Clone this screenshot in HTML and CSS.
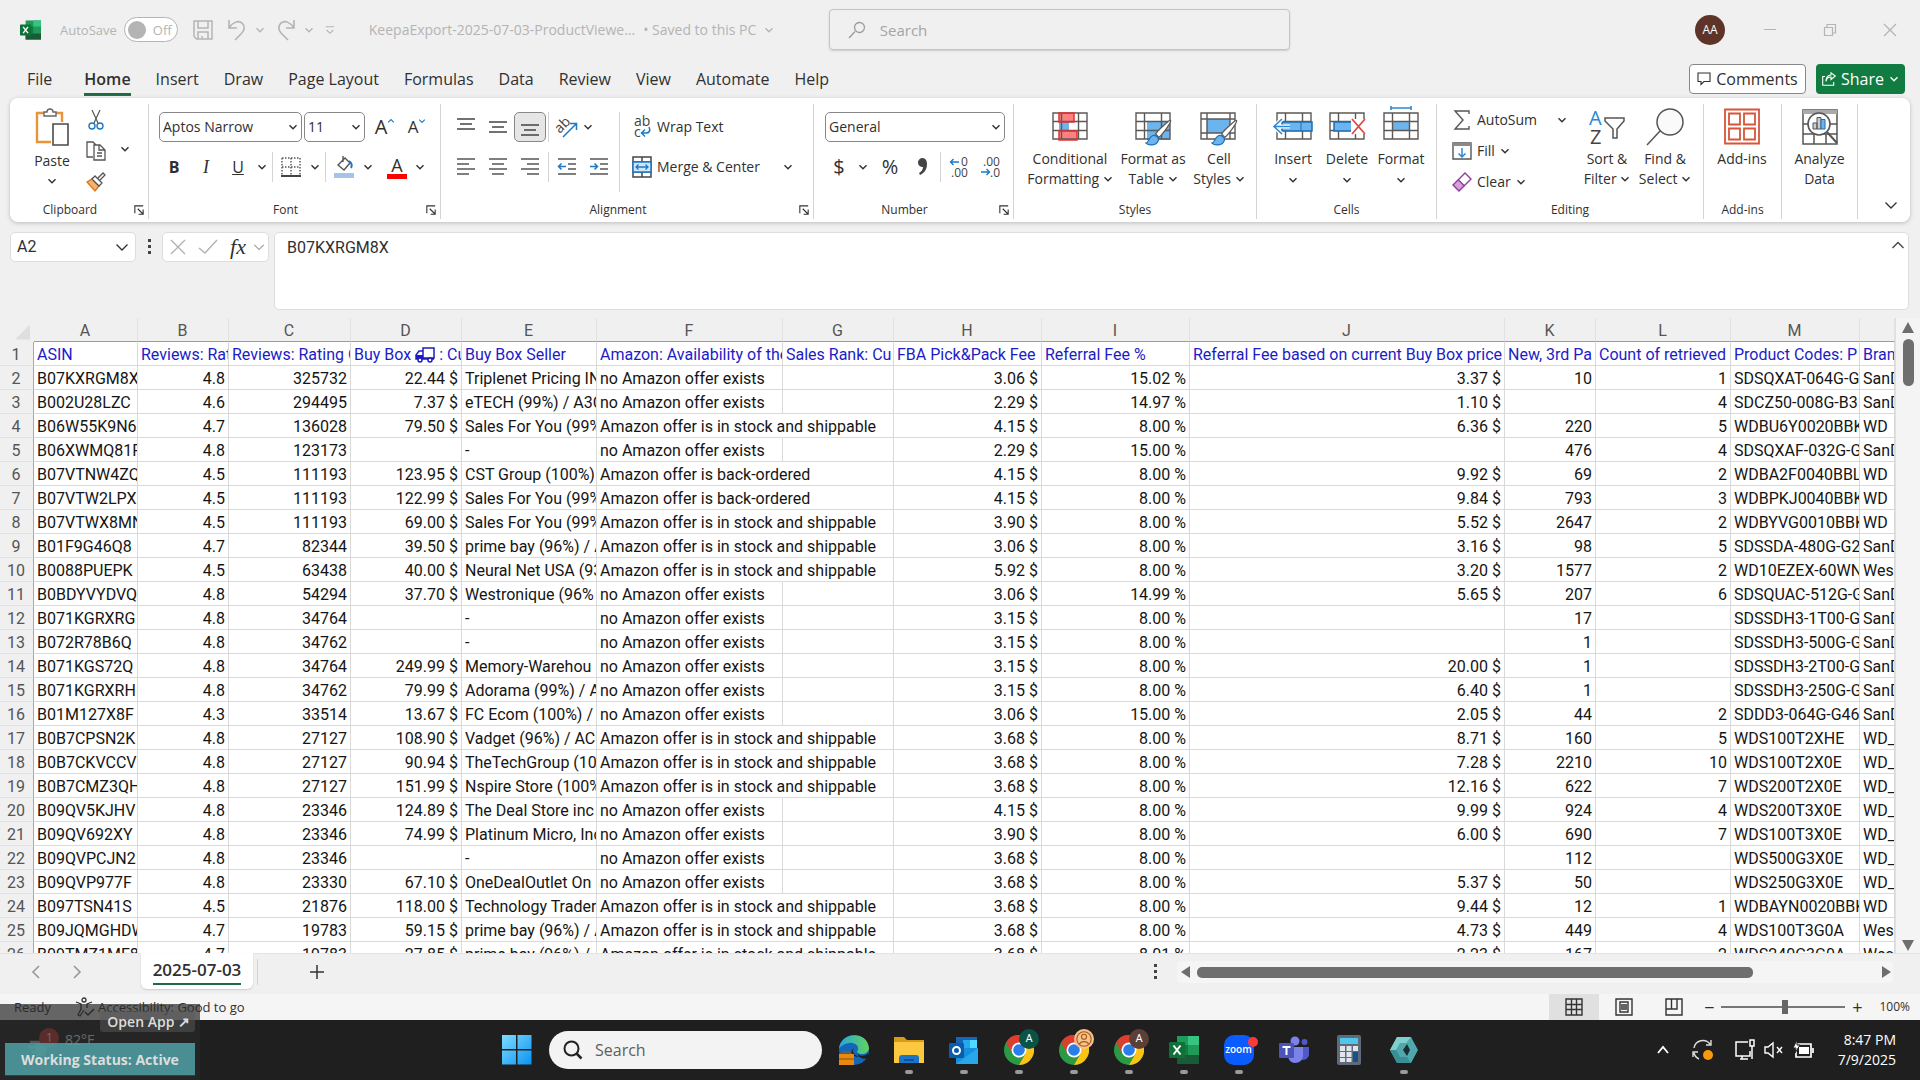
FILE: index.html
```html
<!DOCTYPE html>
<html lang="en">
<head>
<meta charset="utf-8">
<title>KeepaExport-2025-07-03-ProductViewer - Excel</title>
<link rel="stylesheet" href="styles.css">
</head>
<body>
<svg class="defs" aria-hidden="true">
  <symbol id="chev" viewBox="0 0 10 10"><path d="M1.5 3.2 5 6.7 8.5 3.2" fill="none" stroke="currentColor" stroke-width="1.4"/></symbol>
  <symbol id="chevthin" viewBox="0 0 14 14"><path d="m1.500 4.500 5.500 5.500 5.500-5.500" fill="none" stroke="currentColor" stroke-width="1.300"/></symbol>
  <symbol id="launch" viewBox="0 0 12 12"><path d="M1 10V1h10M4.500 4.500l6 6M11 5.500V11H5.500" fill="none" stroke="currentColor" stroke-width="1.300"/></symbol>
  <symbol id="cells" viewBox="0 0 36 28"><path d="M1 1h34v26H1zM1 9.500h34M1 18.500h34M9.500 1v26M26.500 1v26" fill="none" stroke="#5c5856" stroke-width="1.400"/></symbol>
  <symbol id="brush" viewBox="0 0 28 28"><path d="M26.500 1.500c-1-.8-13 10-15.500 14l3.500 3.500C18 16 28 3 26.500 1.500z" fill="#fff" stroke="#5c5856" stroke-width="1.300"/><path d="M1 25c3 .2 3-7.500 8-8 3-.2 6 3 4.500 6C11.500 27.500 4 28 1 25z" fill="#6cb4ee" stroke="#1c6db5" stroke-width="1.200"/></symbol>
  <symbol id="chrome" viewBox="0 0 30 30"><circle cx="15" cy="15" r="15" fill="#2a9a45"/><path d="M2 7.500A15 15 0 0 1 28 7.500L15 8z" fill="#e33b2e"/><path d="M2 7.500 8.500 18.800 15 8z" fill="#e33b2e"/><path d="M28 7.500A15 15 0 0 1 15 30l6.500-11.200L15 7.500z" fill="#fbc313"/><circle cx="15" cy="15" r="7.500" fill="#fff"/><circle cx="15" cy="15" r="5.800" fill="#2b7de9"/></symbol>
  <symbol id="excel" viewBox="0 0 30 28"><path d="M8 0h22v28H8z" fill="#1f9a59"/><path d="M19 0h11v9H19z" fill="#35c481"/><path d="M8 9h11v10H8z" fill="#107c41"/><path d="M19 19h11v9H19zM8 19h11v9H8z" fill="#185c37"/><rect y="6" width="16" height="16" rx="1" fill="#0c7238"/><path d="m4.500 9.500 7 9m0-9-7 9" stroke="#fff" stroke-width="2"/></symbol>
</svg>

<header class="titlebar">
  <svg class="xl-logo" viewBox="0 0 30 28"><use href="#excel"/></svg>
  <label class="autosave"><span>AutoSave</span><input type="checkbox" role="switch"><span class="toggle">Off</span></label>
  <div class="quick">
    <button aria-label="Save"><svg width="20" height="20" viewBox="0 0 20 20"><path d="M1 1h18v18H3.500L1 16.500zM5 1v7h10V1M5 19v-7h10v7M9 19v-3" fill="none" stroke="currentColor" stroke-width="1.500"/></svg></button>
    <button aria-label="Undo"><svg width="20" height="22" viewBox="0 0 20 22"><path d="M2 1v8h8M2 9c4-6 9-8 13-5 4 4 2 8-1 11l-6 6" fill="none" stroke="currentColor" stroke-width="1.600"/></svg></button>
    <svg class="chev"><use href="#chev"/></svg>
    <button aria-label="Redo"><svg width="20" height="22" viewBox="0 0 20 22"><path d="M18 1v8h-8M18 9c-4-6-9-8-13-5-4 4-2 8 1 11l6 6" fill="none" stroke="currentColor" stroke-width="1.600"/></svg></button>
    <svg class="chev"><use href="#chev"/></svg>
    <button aria-label="Customize toolbar"><svg width="10" height="12" viewBox="0 0 12 12"><path d="M1 2h10M2 6l4 4 4-4" fill="none" stroke="currentColor" stroke-width="1.300"/></svg></button>
  </div>
  <div class="doc"><span>KeepaExport-2025-07-03-ProductViewe...</span><span>• Saved to this PC</span><svg class="chev"><use href="#chev"/></svg></div>
  <label class="topsearch"><svg width="18" height="18" viewBox="0 0 18 18"><path d="M1 17l6-6.500M6.500 6.500a5 5 0 1 1 2 4 5 5 0 0 1-2-4z" fill="none" stroke="#9a9a9a" stroke-width="1.300"/></svg><input type="search" placeholder="Search" aria-label="Search"></label>
  <div class="window">
    <span class="avatar">AA</span>
    <button aria-label="Minimize"><svg width="14" height="14" viewBox="0 0 14 14"><path d="M1 6.500h12" stroke="currentColor"/></svg></button>
    <button aria-label="Restore"><svg width="14" height="14" viewBox="0 0 14 14"><path d="M1.500 4.500h8v8h-8zM4 4V1.500h8.500V10H10" fill="none" stroke="currentColor" stroke-width="1.200"/></svg></button>
    <button aria-label="Close"><svg width="14" height="14" viewBox="0 0 14 14"><path d="m1 1 12 12M13 1 1 13" stroke="currentColor" stroke-width="1.200"/></svg></button>
  </div>
</header>

<nav class="tabs">
  <a href="#file">File</a><a href="#home" class="on">Home</a><a href="#insert">Insert</a><a href="#draw">Draw</a><a href="#layout">Page Layout</a><a href="#formulas">Formulas</a><a href="#data">Data</a><a href="#review">Review</a><a href="#view">View</a><a href="#automate">Automate</a><a href="#help">Help</a>
  <div class="tab-actions">
    <button class="comments"><svg width="14" height="14" viewBox="0 0 14 14"><path d="M1 1h12v8.500H7L4 12.500v-3H1z" fill="none" stroke="currentColor" stroke-width="1.100"/></svg>Comments</button>
    <button class="share"><svg width="14" height="14" viewBox="0 0 14 14"><path d="M3 4.500H.7v8.800h11V10M4 9.500C4.500 6 6.500 5 9 5V7.500L13.300 4 9 .8V3C6 3.200 4 5 4 9.500z" fill="none" stroke="currentColor" stroke-width="1.100"/></svg>Share<svg class="chev"><use href="#chev"/></svg></button>
  </div>
</nav>

<section class="ribbon">
  <div class="group g-clip">
    <div class="body">
      <button class="big paste"><svg width="34" height="38" viewBox="0 0 34 38"><path d="M9 5H2v29h14M21 5h6v9" fill="none" stroke="#e8953a" stroke-width="2.400"/><path d="M9 8V4h3a3 3 0 0 1 6 0h3v4z" fill="#fff" stroke="#666" stroke-width="1.400"/><path d="M18 16h15v21H18z" fill="#fff" stroke="#4b4b4b" stroke-width="1.600"/></svg><span>Paste</span><svg class="chev"><use href="#chev"/></svg></button>
      <div class="stack">
        <button aria-label="Cut"><svg width="16" height="20" viewBox="0 0 16 20"><path d="M4 0l6 13M12 0 6 13" stroke="#555" stroke-width="1.200" fill="none"/><circle cx="4" cy="16" r="3" fill="none" stroke="#1e78c8" stroke-width="1.400"/><circle cx="12" cy="16" r="3" fill="none" stroke="#1e78c8" stroke-width="1.400"/></svg></button>
        <button aria-label="Copy"><svg width="20" height="20" viewBox="0 0 20 20"><path d="M7 16H1V1h6l3 3M8 4h6l5 5v10H8zM13 4v5h6M11 12h5M11 15h5" fill="none" stroke="#555" stroke-width="1.300"/></svg></button>
        <button aria-label="Format Painter"><svg width="20" height="20" viewBox="0 0 20 20"><path d="M1 10l5-3 7 7-4 5z" fill="#f6b26b" stroke="#d9791d" stroke-width="1.400"/><path d="M6 7l3-3 7 7-3 3zM12 6l5-5 2 2-5 5" fill="#fff" stroke="#555" stroke-width="1.300"/></svg></button>
      </div>
      <svg class="chev mid"><use href="#chev"/></svg>
    </div>
    <div class="cap">Clipboard<svg class="launch"><use href="#launch"/></svg></div>
  </div>

  <div class="group g-font">
    <div class="body rows">
      <div class="row">
        <span class="sel w-font"><select aria-label="Font"><option>Aptos Narrow</option></select><svg class="chev"><use href="#chev"/></svg></span>
        <span class="sel w-size"><select aria-label="Font size"><option>11</option></select><svg class="chev"><use href="#chev"/></svg></span>
        <button class="ib big-a" aria-label="Increase font size">A<svg class="chev up"><use href="#chev"/></svg></button>
        <button class="ib small-a" aria-label="Decrease font size">A<svg class="chev"><use href="#chev"/></svg></button>
      </div>
      <div class="row">
        <button class="ib"><b>B</b></button><button class="ib it"><i>I</i></button><button class="ib"><u>U</u></button><svg class="chev wide"><use href="#chev"/></svg><i class="sep"></i>
        <button class="ib" aria-label="Borders"><svg width="20" height="20" viewBox="0 0 20 20"><path d="M1 1h18v17M1 1v17M10 1v17M1 10h18" fill="none" stroke="#555" stroke-width="1.400" stroke-dasharray="1.500 1.500"/><path d="M0 19h20" stroke="#444" stroke-width="2"/></svg></button><svg class="chev wide"><use href="#chev"/></svg><i class="sep"></i>
        <button class="ib" aria-label="Fill color"><svg width="20" height="22" viewBox="0 0 20 22"><path d="M4 9l7-7 5 5-6 7zM9 0v6" fill="#fff" stroke="#555" stroke-width="1.400"/><path d="M15 5c3 2 3 5 2 7" fill="none" stroke="#1e78c8" stroke-width="2"/><path d="M0 17h20v5H0z" fill="#a3c4e8"/></svg></button><svg class="chev wide"><use href="#chev"/></svg>
        <button class="ib fontcolor" aria-label="Font color">A</button><svg class="chev wide"><use href="#chev"/></svg>
      </div>
    </div>
    <div class="cap">Font<svg class="launch"><use href="#launch"/></svg></div>
  </div>

  <div class="group g-align">
    <div class="body">
      <div class="rows">
        <div class="row">
          <button class="ib" aria-label="Top align"><svg width="20" height="20" viewBox="0 0 20 20"><path d="M1 2h18M4 7h12M1 12h18" stroke="#444" stroke-width="1.500"/></svg></button><button class="ib" aria-label="Middle align"><svg width="20" height="20" viewBox="0 0 20 20"><path d="M1 5h18M4 10h12M1 15h18" stroke="#444" stroke-width="1.500"/></svg></button><button class="ib pressed" aria-label="Bottom align"><svg width="20" height="20" viewBox="0 0 20 20"><path d="M1 8h18M4 13h12M1 18h18" stroke="#444" stroke-width="1.500"/></svg></button><i class="sep"></i>
          <button class="ib" aria-label="Orientation"><svg width="22" height="22" viewBox="0 0 22 22"><text x="-2" y="12" transform="rotate(-45 8 8)" font-size="14" fill="#444">ab</text><path d="M7 21 20 8M14 7.500h6.500V14" fill="none" stroke="#1e78c8" stroke-width="1.500"/></svg></button><svg class="chev"><use href="#chev"/></svg>
        </div>
        <div class="row">
          <button class="ib" aria-label="Align left"><svg width="20" height="20" viewBox="0 0 20 20"><path d="M1 2h18M1 7h12M1 12h18M1 17h12" stroke="#555" stroke-width="1.500"/></svg></button><button class="ib" aria-label="Center"><svg width="20" height="20" viewBox="0 0 20 20"><path d="M1 2h18M4 7h12M1 12h18M4 17h12" stroke="#555" stroke-width="1.500"/></svg></button><button class="ib" aria-label="Align right"><svg width="20" height="20" viewBox="0 0 20 20"><path d="M1 2h18M7 7h12M1 12h18M7 17h12" stroke="#555" stroke-width="1.500"/></svg></button><i class="sep"></i>
          <button class="ib" aria-label="Decrease indent"><svg width="20" height="20" viewBox="0 0 20 20"><path d="M1 2h18M11 7h8M11 12h8M1 17h18" stroke="#555" stroke-width="1.500"/><path d="M9 9.500H1.500M4.500 6.500l-3 3 3 3" fill="none" stroke="#1e78c8" stroke-width="1.500"/></svg></button><button class="ib" aria-label="Increase indent"><svg width="20" height="20" viewBox="0 0 20 20"><path d="M1 2h18M11 7h8M11 12h8M1 17h18" stroke="#555" stroke-width="1.500"/><path d="M1 9.500h7.500M5.500 6.500l3 3-3 3" fill="none" stroke="#1e78c8" stroke-width="1.500"/></svg></button>
        </div>
      </div>
      <i class="sep tall"></i>
      <div class="rows wraps">
        <button class="tb"><svg width="20" height="22" viewBox="0 0 20 22"><text x="2" y="10" font-size="14" fill="#444">ab</text><text x="2" y="21" font-size="14" fill="#444">c</text><path d="M17 11c2 4 0 6-3 6h-4M13 13.500 9.500 17l3.500 3.500" fill="none" stroke="#1e78c8" stroke-width="1.500"/></svg>Wrap Text</button>
        <button class="tb"><svg width="20" height="22" viewBox="0 0 20 22"><path d="M1 1h18v20H1zM1 6h18M1 16h18M10 1v5M10 16v5" fill="none" stroke="#444" stroke-width="1.500"/><path d="M1 6h18v10H1z" fill="#cfe5f8" stroke="#1e78c8" stroke-width="1.500"/><path d="M4 11h12M6.500 8.500 4 11l2.500 2.500M13.500 8.500 16 11l-2.500 2.500" fill="none" stroke="#1e78c8" stroke-width="1.300"/></svg>Merge &amp; Center<svg class="chev end"><use href="#chev"/></svg></button>
      </div>
    </div>
    <div class="cap">Alignment<svg class="launch"><use href="#launch"/></svg></div>
  </div>

  <div class="group g-num">
    <div class="body rows">
      <div class="row"><span class="sel w-num"><select aria-label="Number format"><option>General</option></select><svg class="chev"><use href="#chev"/></svg></span></div>
      <div class="row">
        <button class="ib sym">$</button><svg class="chev wide"><use href="#chev"/></svg>
        <button class="ib sym pc">%</button><button class="ib" aria-label="Comma style"><svg width="12" height="20" viewBox="0 0 12 20"><path d="M6 1a4.500 4.500 0 1 0 1 9c0 3-2 5-4 6l1 2c4-2 7-5 7-11 0-4-2-6-5-6z" fill="#444"/></svg></button><i class="sep"></i>
        <button class="ib" aria-label="Increase decimal"><svg width="20" height="22" viewBox="0 0 20 22"><text x="12" y="10" font-size="12" fill="#444">0</text><text x="2" y="21" font-size="12" fill="#444">.00</text><path d="M10 6H1.500M4.500 3l-3 3 3 3" fill="none" stroke="#1e78c8" stroke-width="1.400"/></svg></button><button class="ib" aria-label="Decrease decimal"><svg width="20" height="22" viewBox="0 0 20 22"><text x="2" y="10" font-size="12" fill="#444">.00</text><text x="9" y="21" font-size="12" fill="#444">.0</text><path d="M0 16h8.500M5.500 13l3 3-3 3" fill="none" stroke="#1e78c8" stroke-width="1.400"/></svg></button>
      </div>
    </div>
    <div class="cap">Number<svg class="launch"><use href="#launch"/></svg></div>
  </div>

  <div class="group g-styles">
    <div class="body">
      <button class="big w98"><svg width="38" height="38" viewBox="0 0 38 38"><path d="M8 5h15v9H8zM8 23h18v9H8z" fill="#ff8080"/><path d="M8 14h10v9H8z" fill="#6cb4ee"/><use href="#cells" x="1" y="4" width="36" height="28"/><path d="M8 5h15v9H8zM8 23h18v9H8z" fill="none" stroke="#d33" stroke-width="1.500"/></svg><span>Conditional<br>Formatting <svg class="chev"><use href="#chev"/></svg></span></button>
      <button class="big w68"><svg width="38" height="38" viewBox="0 0 38 38"><path d="M13 14h23v18H13z" fill="#6cb4ee"/><use href="#cells" x="1" y="4" width="36" height="28"/><use href="#brush" x="11" y="11" width="27" height="27"/></svg><span>Format as<br>Table <svg class="chev"><use href="#chev"/></svg></span></button>
      <button class="big w64"><svg width="38" height="38" viewBox="0 0 38 38"><path d="M7 11h23v14H7z" fill="#6cb4ee"/><path d="M1 5h34v26H1zM1 11h34M1 25h34M7 5v26M30 5v26" fill="none" stroke="#5c5856" stroke-width="1.400"/><use href="#brush" x="11" y="11" width="27" height="27"/></svg><span>Cell<br>Styles <svg class="chev"><use href="#chev"/></svg></span></button>
    </div>
    <div class="cap">Styles</div>
  </div>

  <div class="group g-cells">
    <div class="body">
      <button class="big w54"><svg width="40" height="38" viewBox="0 0 40 38"><use href="#cells" x="3" y="4" width="36" height="28"/><path d="M9 14h30v9H9z" fill="#6cb4ee" stroke="#1c6db5" stroke-width="1.500"/><path d="M28 14v9" stroke="#1c6db5"/><path d="M17 18.500H2M9 11l-8 7.500L9 26" fill="none" stroke="#fff" stroke-width="4"/><path d="M17 18.500H2M9 11l-8 7.500L9 26" fill="none" stroke="#2b88d8" stroke-width="1.600"/></svg><span>Insert</span><svg class="chev"><use href="#chev"/></svg></button>
      <button class="big w54"><svg width="38" height="38" viewBox="0 0 38 38"><use href="#cells" x="1" y="4" width="36" height="28"/><path d="M6 14h18v9H6z" fill="#6cb4ee" stroke="#1c6db5" stroke-width="1.500"/><path d="M23 11h15v15H23z" fill="#fff"/><path d="m24 11 13 15M37 11 24 26" stroke="#e04848" stroke-width="1.800"/></svg><span>Delete</span><svg class="chev"><use href="#chev"/></svg></button>
      <button class="big w54"><svg width="38" height="38" viewBox="0 0 38 38"><path d="M10 14h18v9H10z" fill="#6cb4ee"/><use href="#cells" x="1" y="4" width="36" height="28"/><path d="M9 0h20M9-2v4M29-2v4" stroke="#2b88d8" stroke-width="1.600"/></svg><span>Format</span><svg class="chev"><use href="#chev"/></svg></button>
    </div>
    <div class="cap">Cells</div>
  </div>

  <div class="group g-edit">
    <div class="body">
      <div class="stack edits">
        <button class="tb"><svg width="20" height="20" viewBox="0 0 20 20"><path d="M17 4V1H3l8 9-8 9h14v-3" fill="none" stroke="#555" stroke-width="1.400"/></svg>AutoSum<svg class="chev end"><use href="#chev"/></svg></button>
        <button class="tb"><svg width="20" height="20" viewBox="0 0 20 20"><path d="M1 2h18v16H1z" fill="#fff" stroke="#555" stroke-width="1.400"/><path d="M1 2h18v3H1z" fill="#8a8a8a"/><path d="M10 7v9M6.500 12.500 10 16l3.500-3.500" fill="none" stroke="#2b88d8" stroke-width="1.500"/></svg>Fill <svg class="chev"><use href="#chev"/></svg></button>
        <button class="tb"><svg width="20" height="20" viewBox="0 0 20 20"><path d="m1 13 5-5 7 6-6 5z" fill="#d7a0dc"/><path d="M1 13 13 1l6 6L7 19zM6.500 8l6 6" fill="none" stroke="#8e3b9c" stroke-width="1.400"/></svg>Clear <svg class="chev"><use href="#chev"/></svg></button>
      </div>
      <button class="big w58"><svg width="38" height="38" viewBox="0 0 38 38"><text x="1" y="17" font-size="20" fill="#2b88d8">A</text><text x="2" y="36" font-size="20" fill="#444">Z</text><path d="M17 10h19v3l-7 8v9h-4v-9l-8-8z" fill="none" stroke="#555" stroke-width="1.500"/></svg><span>Sort &amp;<br>Filter <svg class="chev"><use href="#chev"/></svg></span></button>
      <button class="big w58"><svg width="38" height="38" viewBox="0 0 38 38"><circle cx="24" cy="14" r="13" fill="#fafafa" stroke="#555" stroke-width="1.500"/><path d="M14 23 1 37" stroke="#555" stroke-width="1.500"/></svg><span>Find &amp;<br>Select <svg class="chev"><use href="#chev"/></svg></span></button>
    </div>
    <div class="cap">Editing</div>
  </div>

  <div class="group g-add">
    <div class="body"><button class="big w76"><svg width="38" height="38" viewBox="0 0 38 38"><path d="M2 1.500h34v34H2zM6 5.500h11v11H6zM21 5.500h11v11H21zM6 20.500h11v11H6zM21 20.500h11v11H21z" fill="none" stroke="#d8553a" stroke-width="1.800"/></svg><span>Add-ins</span></button></div>
    <div class="cap">Add-ins</div>
  </div>
  <div class="group g-analyze">
    <div class="body"><button class="big w76"><svg width="38" height="38" viewBox="0 0 38 38"><path d="M2 2h34v34H2zM2 16h34M2 26h34M13 26v10M25 26v10" fill="none" stroke="#555" stroke-width="1.500"/><path d="M2 2h34v4H2z" fill="#aaa"/><circle cx="18" cy="16" r="11" fill="#fff" stroke="#555" stroke-width="1.600"/><path d="m26 24 10 11" stroke="#555" stroke-width="2"/><path d="M12 15h4v6h-4zM16 9.500h4V21h-4z" fill="#ccc" stroke="#555"/><path d="M20 11.500h4V21h-4z" fill="#6cb4ee" stroke="#1c6db5"/></svg><span>Analyze<br>Data</span></button></div>
  </div>
  <button class="collapse" aria-label="Collapse ribbon"><svg width="14" height="14"><use href="#chevthin"/></svg></button>
</section>

<section class="formula">
  <span class="namebox"><input value="A2" aria-label="Name box"><svg width="14" height="14"><use href="#chevthin"/></svg></span>
  <span class="dots"></span>
  <div class="fx">
    <button aria-label="Cancel"><svg width="18" height="18" viewBox="0 0 18 18"><path d="m2 2 14 14M16 2 2 16" stroke="#b0b0b0" stroke-width="1.300"/></svg></button><button aria-label="Enter"><svg width="20" height="18" viewBox="0 0 20 18"><path d="m1 10 6 5L19 2" fill="none" stroke="#b0b0b0" stroke-width="1.300"/></svg></button><button class="fxb"><i>fx</i></button><svg class="gray" width="12" height="12"><use href="#chevthin"/></svg>
  </div>
  <div class="fbox"><textarea aria-label="Formula bar">B07KXRGM8X</textarea><svg width="14" height="14" viewBox="0 0 14 14"><path d="M1.500 10 7 4.500l5.500 5.500" fill="none" stroke="#444" stroke-width="1.300"/></svg></div>
</section>

<main class="sheet">
  <div class="gridwrap">
  <table>
    <colgroup><col class="c34"><col class="c104"><col class="c91"><col class="c122"><col class="c111"><col class="c135"><col class="c186"><col class="c111"><col class="c148"><col class="c148"><col class="c315"><col class="c91"><col class="c135"><col class="c129"><col></colgroup>
    <thead><tr><th><span class="corner"></span><th>A<th>B<th>C<th>D<th>E<th>F<th>G<th>H<th>I<th>J<th>K<th>L<th>M<th></thead>
    <tbody>
    <tr class="head"><th>1<td>ASIN<td>Reviews: Rat<td>Reviews: Rating C<td>Buy Box <svg width="20" height="16" viewBox="0 0 20 16"><path d="M8 1h11v10H8zM8 4H4L1 8v4h18" fill="none" stroke="#1c1cc0" stroke-width="1.500"/><path d="M1 8h7v4H1z" fill="#1c1cc0"/><circle cx="5" cy="13" r="2" fill="#fff" stroke="#1c1cc0" stroke-width="1.500"/><circle cx="15" cy="13" r="2" fill="#fff" stroke="#1c1cc0" stroke-width="1.500"/></svg> : Cu<td>Buy Box Seller<td>Amazon: Availability of the<td>Sales Rank: Cu<td>FBA Pick&amp;Pack Fee<td>Referral Fee %<td>Referral Fee based on current Buy Box price<td>New, 3rd Pa<td>Count of retrieved<td>Product Codes: P<td>Bran
    <tr><th>2<td>B07KXRGM8X<td>4.8<td>325732<td>22.44 $<td>Triplenet Pricing IN<td>no Amazon offer exists<td><td>3.06 $<td>15.02 %<td>3.37 $<td>10<td>1<td>SDSQXAT-064G-G<td>SanD
    <tr><th>3<td>B002U28LZC<td>4.6<td>294495<td>7.37 $<td>eTECH (99%) / A3C<td>no Amazon offer exists<td><td>2.29 $<td>14.97 %<td>1.10 $<td><td>4<td>SDCZ50-008G-B35<td>SanD
    <tr class="spill"><th>4<td>B06W55K9N6<td>4.7<td>136028<td>79.50 $<td>Sales For You (99%<td>Amazon offer is in stock and shippable<td><td>4.15 $<td>8.00 %<td>6.36 $<td>220<td>5<td>WDBU6Y0020BBK<td>WD
    <tr><th>5<td>B06XWMQ81P<td>4.8<td>123173<td><td>-<td>no Amazon offer exists<td><td>2.29 $<td>15.00 %<td><td>476<td>4<td>SDSQXAF-032G-G<td>SanD
    <tr class="spill"><th>6<td>B07VTNW4ZQ<td>4.5<td>111193<td>123.95 $<td>CST Group (100%)<td>Amazon offer is back-ordered<td><td>4.15 $<td>8.00 %<td>9.92 $<td>69<td>2<td>WDBA2F0040BBL<td>WD
    <tr class="spill"><th>7<td>B07VTW2LPX<td>4.5<td>111193<td>122.99 $<td>Sales For You (99%<td>Amazon offer is back-ordered<td><td>4.15 $<td>8.00 %<td>9.84 $<td>793<td>3<td>WDBPKJ0040BBK<td>WD
    <tr class="spill"><th>8<td>B07VTWX8MN<td>4.5<td>111193<td>69.00 $<td>Sales For You (99%<td>Amazon offer is in stock and shippable<td><td>3.90 $<td>8.00 %<td>5.52 $<td>2647<td>2<td>WDBYVG0010BBK<td>WD
    <tr class="spill"><th>9<td>B01F9G46Q8<td>4.7<td>82344<td>39.50 $<td>prime bay (96%) / A<td>Amazon offer is in stock and shippable<td><td>3.06 $<td>8.00 %<td>3.16 $<td>98<td>5<td>SDSSDA-480G-G2<td>SanD
    <tr class="spill"><th>10<td>B0088PUEPK<td>4.5<td>63438<td>40.00 $<td>Neural Net USA (93<td>Amazon offer is in stock and shippable<td><td>5.92 $<td>8.00 %<td>3.20 $<td>1577<td>2<td>WD10EZEX-60WN<td>Wes
    <tr><th>11<td>B0BDYVYDVQ<td>4.8<td>54294<td>37.70 $<td>Westronique (96%<td>no Amazon offer exists<td><td>3.06 $<td>14.99 %<td>5.65 $<td>207<td>6<td>SDSQUAC-512G-G<td>SanD
    <tr><th>12<td>B071KGRXRG<td>4.8<td>34764<td><td>-<td>no Amazon offer exists<td><td>3.15 $<td>8.00 %<td><td>17<td><td>SDSSDH3-1T00-G<td>SanD
    <tr><th>13<td>B072R78B6Q<td>4.8<td>34762<td><td>-<td>no Amazon offer exists<td><td>3.15 $<td>8.00 %<td><td>1<td><td>SDSSDH3-500G-G<td>SanD
    <tr><th>14<td>B071KGS72Q<td>4.8<td>34764<td>249.99 $<td>Memory-Warehou<td>no Amazon offer exists<td><td>3.15 $<td>8.00 %<td>20.00 $<td>1<td><td>SDSSDH3-2T00-G<td>SanD
    <tr><th>15<td>B071KGRXRH<td>4.8<td>34762<td>79.99 $<td>Adorama (99%) / A<td>no Amazon offer exists<td><td>3.15 $<td>8.00 %<td>6.40 $<td>1<td><td>SDSSDH3-250G-G<td>SanD
    <tr><th>16<td>B01M127X8F<td>4.3<td>33514<td>13.67 $<td>FC Ecom (100%) / A<td>no Amazon offer exists<td><td>3.06 $<td>15.00 %<td>2.05 $<td>44<td>2<td>SDDD3-064G-G46<td>SanD
    <tr class="spill"><th>17<td>B0B7CPSN2K<td>4.8<td>27127<td>108.90 $<td>Vadget (96%) / AC0<td>Amazon offer is in stock and shippable<td><td>3.68 $<td>8.00 %<td>8.71 $<td>160<td>5<td>WDS100T2XHE<td>WD_
    <tr class="spill"><th>18<td>B0B7CKVCCV<td>4.8<td>27127<td>90.94 $<td>TheTechGroup (10<td>Amazon offer is in stock and shippable<td><td>3.68 $<td>8.00 %<td>7.28 $<td>2210<td>10<td>WDS100T2X0E<td>WD_
    <tr class="spill"><th>19<td>B0B7CMZ3QH<td>4.8<td>27127<td>151.99 $<td>Nspire Store (100%<td>Amazon offer is in stock and shippable<td><td>3.68 $<td>8.00 %<td>12.16 $<td>622<td>7<td>WDS200T2X0E<td>WD_
    <tr><th>20<td>B09QV5KJHV<td>4.8<td>23346<td>124.89 $<td>The Deal Store inc<td>no Amazon offer exists<td><td>4.15 $<td>8.00 %<td>9.99 $<td>924<td>4<td>WDS200T3X0E<td>WD_
    <tr><th>21<td>B09QV692XY<td>4.8<td>23346<td>74.99 $<td>Platinum Micro, Inc<td>no Amazon offer exists<td><td>3.90 $<td>8.00 %<td>6.00 $<td>690<td>7<td>WDS100T3X0E<td>WD_
    <tr><th>22<td>B09QVPCJN2<td>4.8<td>23346<td><td>-<td>no Amazon offer exists<td><td>3.68 $<td>8.00 %<td><td>112<td><td>WDS500G3X0E<td>WD_
    <tr><th>23<td>B09QVP977F<td>4.8<td>23330<td>67.10 $<td>OneDealOutlet On<td>no Amazon offer exists<td><td>3.68 $<td>8.00 %<td>5.37 $<td>50<td><td>WDS250G3X0E<td>WD_
    <tr class="spill"><th>24<td>B097TSN41S<td>4.5<td>21876<td>118.00 $<td>Technology Trader<td>Amazon offer is in stock and shippable<td><td>3.68 $<td>8.00 %<td>9.44 $<td>12<td>1<td>WDBAYN0020BBK<td>WD
    <tr class="spill"><th>25<td>B09JQMGHDW<td>4.7<td>19783<td>59.15 $<td>prime bay (96%) / A<td>Amazon offer is in stock and shippable<td><td>3.68 $<td>8.00 %<td>4.73 $<td>449<td>4<td>WDS100T3G0A<td>Wes
    <tr class="spill"><th>26<td>B09TMZ1MF8<td>4.7<td>19783<td>27.85 $<td>prime bay (96%) / A<td>Amazon offer is in stock and shippable<td><td>3.68 $<td>8.01 %<td>2.23 $<td>167<td>2<td>WDS240G3G0A<td>Wes
    </tbody>
  </table>
  </div>
  <div class="vscroll"><i class="tri"></i><i class="vthumb"></i><i class="tri down"></i></div>
</main>

<section class="sheettabs">
  <button class="nav" aria-label="Previous sheet"><svg width="10" height="14" viewBox="0 0 10 14"><path d="M8 1 2 7l6 6" fill="none" stroke="#999" stroke-width="1.600"/></svg></button>
  <button class="nav" aria-label="Next sheet"><svg width="10" height="14" viewBox="0 0 10 14"><path d="m2 1 6 6-6 6" fill="none" stroke="#999" stroke-width="1.600"/></svg></button>
  <button class="stab"><span>2025-07-03</span></button>
  <button class="add" aria-label="New sheet"><svg width="16" height="16" viewBox="0 0 16 16"><path d="M8 1v14M1 8h14" stroke="#333" stroke-width="1.500"/></svg></button>
  <div class="hzone"><span class="dots"></span><div class="hscroll"><i class="tri left"></i><div class="htrack"><i class="hthumb"></i></div><i class="tri right"></i></div></div>
</section>

<footer class="status">
  <span>Ready</span>
  <span class="acc"><svg width="20" height="20" viewBox="0 0 20 20"><circle cx="9" cy="3" r="2" fill="none" stroke="#333" stroke-width="1.300"/><path d="M1 5l5 2v5l-3 6 2 1 4-6M17 5l-5 2v4" fill="none" stroke="#333" stroke-width="1.300"/><path d="m10 15 3 3 6-6" fill="none" stroke="#333" stroke-width="1.500"/></svg>Accessibility: Good to go</span>
  <div class="views">
    <button class="sel-view" aria-label="Normal view"><svg width="18" height="18" viewBox="0 0 18 18"><path d="M1 1h16v16H1zM1 6.500h16M1 11.500h16M6.500 1v16M11.500 1v16" fill="none" stroke="#333" stroke-width="1.400"/></svg></button>
    <button aria-label="Page layout view"><svg width="18" height="18" viewBox="0 0 18 18"><path d="M1 1h16v16H1zM5 4h8v10H5zM6 7h6M6 9h6M6 11h6" fill="none" stroke="#333" stroke-width="1.400"/></svg></button>
    <button aria-label="Page break view"><svg width="18" height="18" viewBox="0 0 18 18"><path d="M1 1h16v16H1zM6.500 1v10M1 11h11V1" fill="none" stroke="#333" stroke-width="1.400"/></svg></button>
  </div>
  <button class="z">−</button><input type="range" min="0" max="100" value="51" aria-label="Zoom"><button class="z">+</button><span class="pct">100%</span>
</footer>

<section class="taskbar">
  <div class="weather"><svg width="32" height="32" viewBox="0 0 32 32"><path d="M7 12h14l-4 14H8z" fill="#d8b458"/><path d="M2 12h14M0 17h18M4 22h14" stroke="#b9c4cc" stroke-width="2.500"/><circle cx="21" cy="8" r="10" fill="#d13a30"/></svg><span class="badge">1</span><span>82°F<br>Haze</span></div>
  <div class="center">
    <button class="start" aria-label="Start"><svg width="30" height="30" viewBox="0 0 30 30"><defs><linearGradient id="w" x2="1" y2="1"><stop stop-color="#7fdcff"/><stop offset="1" stop-color="#0a93f2"/></linearGradient></defs><path d="M0 0h14v14H0zM15.500 0h14v14h-14zM0 15.500h14v14H0zM15.500 15.500h14v14h-14z" fill="url(#w)"/></svg></button>
    <label class="tsearch"><svg width="20" height="20" viewBox="0 0 20 20"><circle cx="8.500" cy="8.500" r="7" fill="none" stroke="#222" stroke-width="2"/><path d="m13.500 13.500 5 5" stroke="#222" stroke-width="2.500"/></svg><input type="search" placeholder="Search" aria-label="Search Windows"></label>
    <button class="app" aria-label="Edge"><svg width="30" height="30" viewBox="0 0 30 30"><defs><linearGradient id="e"><stop stop-color="#2aa5e0"/><stop offset="1" stop-color="#5fd45a"/></linearGradient></defs><circle cx="15" cy="15" r="15" fill="#1565b8"/><path d="M0 14C1-3 28-5 30 13c0 6-9 8-12 4 4-6-3-10-8-9C4 9 1 12 0 14z" fill="url(#e)"/><path d="M15 13c-3 3 0 8 6 9-6 1-12-5-6-9z" fill="#1f1f1f"/><path d="M18 19c4 3 9 2 11-1v5c-4 2-9 0-11-4z" fill="#1f1f1f"/><rect y="19" width="15" height="11" fill="#e88a12"/><path d="M4 19v-2h7v2" stroke="#a85a08" fill="none"/><path d="M0 24h15" stroke="#8e4d0a"/></svg></button>
    <button class="app run" aria-label="File Explorer"><svg width="30" height="30" viewBox="0 0 30 30"><path d="M0 2h10l3 3h17v8H0z" fill="#d89a1c"/><path d="M0 7h30v21H0z" fill="#fcc840"/><path d="M5 28v-5q0-3 3-3h14q3 0 3 3v5z" fill="#1a74c7"/><path d="M10 25h10" stroke="#0a4b8c" stroke-width="1.500"/></svg></button>
    <button class="app run" aria-label="Outlook"><svg width="30" height="30" viewBox="0 0 30 30"><path d="M7 2h21v13H7z" fill="#1466b8"/><path d="M14 5h7v8h-7z" fill="#28a8ea"/><path d="M21 5h7v8h-7z" fill="#50d9ff"/><path d="M7 13h22v16H7z" fill="#1490df"/><path d="m7 29 22-16v16z" fill="#28a8ea"/><rect y="8" width="15" height="15" rx="1" fill="#0a5cad"/><circle cx="7.500" cy="15.500" r="3.500" fill="none" stroke="#fff" stroke-width="2"/></svg></button>
    <button class="app run" aria-label="Chrome profile 1"><svg width="30" height="30"><use href="#chrome"/></svg><span class="prof p1">A</span></button>
    <button class="app run" aria-label="Chrome profile 2"><svg width="30" height="30"><use href="#chrome"/></svg><span class="prof p2"><svg width="16" height="16" viewBox="0 0 14 14"><circle cx="7" cy="7" r="6.300" fill="none" stroke="#a85a18"/><circle cx="7" cy="5" r="2.200" fill="none" stroke="#a85a18"/><path d="M3 11.500c1-3 7-3 8 0" fill="none" stroke="#a85a18"/></svg></span></button>
    <button class="app run" aria-label="Chrome profile 3"><svg width="30" height="30"><use href="#chrome"/></svg><span class="prof p3">A</span></button>
    <button class="app run" aria-label="Excel"><svg width="30" height="28"><use href="#excel"/></svg></button>
    <button class="app run zoomapp"><span>zoom</span><i></i></button>
    <button class="app" aria-label="Teams"><svg width="30" height="28" viewBox="0 0 30 28"><circle cx="16" cy="5" r="4.500" fill="#7b83eb"/><circle cx="25.500" cy="6" r="3" fill="#5059c9"/><path d="M20 11h10v8q-1 5-7 5z" fill="#5059c9"/><path d="M9 11h15v9q-1 7-8 7-6 0-7-7z" fill="#7b83eb"/><rect y="7" width="15" height="15" rx="1" fill="#4b53bc"/><path d="M3.500 11h8M7.500 11v8" stroke="#fff" stroke-width="2"/></svg></button>
    <button class="app" aria-label="Calculator"><svg width="24" height="30" viewBox="0 0 24 30"><rect width="24" height="30" rx="2" fill="#5f6b78"/><path d="M3 3h18v6H3z" fill="#4fc6ea"/><path d="M3 11h5v5H3zM9.500 11h5v5h-5zM16 11h5v5h-5zM3 17h5v5H3zM9.500 17h5v5h-5zM3 23h5v4H3zM9.500 23h5v4h-5z" fill="#dfe5ea"/><path d="M16 17h5v10h-5z" fill="#1a4f8c"/></svg></button>
    <button class="app run" aria-label="Tracker"><svg width="28" height="26" viewBox="0 0 28 26"><path d="M7 0h14l7 13-7 13H7L0 13z" fill="#4fa8ab"/><path d="M7 0h14l-5 6h-6L6 13H0z" fill="#7fcfcf"/><path d="M0 13l7 13h14l-4-6h-7l-4-7z" fill="#3a8f95"/><path d="m17 7 3 6-3 6-4-6z" fill="#1a2e33"/></svg></button>
  </div>
  <div class="tray">
    <svg width="14" height="14" viewBox="0 0 14 14"><path d="m2 10 5-6 5 6" fill="none" stroke="#fff" stroke-width="1.800"/></svg>
    <svg class="sync" width="22" height="22" viewBox="0 0 22 22"><path d="M2 9a9 9 0 0 1 16-4M19 1v5h-5M7 20a9 9 0 0 1-5-6M1 18v-5h5" fill="none" stroke="#ddd" stroke-width="1.400"/><circle cx="16" cy="16" r="5" fill="#f99a0c"/></svg>
    <svg width="22" height="22" viewBox="0 0 22 22"><path d="M14 3H2v14h14v-5M6 20h8M8 17v3M16 1h4v6h-4zM18 7v13" fill="none" stroke="#fff" stroke-width="1.500"/></svg>
    <svg class="sound" width="20" height="20" viewBox="0 0 20 20"><path d="M1 7h3l5-4v14l-5-4H1zM13 7l5 6M18 7l-5 6" fill="none" stroke="#fff" stroke-width="1.400"/></svg>
    <svg class="batt" width="22" height="20" viewBox="0 0 22 20"><path d="M6 7h10v7H6z" fill="#fff"/><path d="M3 4h15v13H3zM20 8v5" fill="none" stroke="#fff" stroke-width="1.700"/><path d="M4 0 0 8h3l-1 5 5-8H4z" fill="#fff" stroke="#1f1f1f"/></svg>
    <div class="clock">8:47 PM<br>7/9/2025</div>
  </div>
</section>

<aside class="tracker"><button class="open">Open App ↗</button><div class="working">Working Status: Active</div></aside>
</body>
</html>
```
FILE: styles.css
```css
* { box-sizing: border-box; }
body {
  margin: 0;
  height: 100vh;
  display: flex;
  flex-direction: column;
  overflow: hidden;
  background: #f0f0f0;
  color: #303030;
  font: 14px/20px "Open Sans", "Noto Sans", sans-serif;
}
button, input, select, textarea { font: inherit; color: inherit; background: none; border: 0; padding: 0; margin: 0; outline: 0; }
button { display: flex; align-items: center; justify-content: center; white-space: nowrap; }
svg { flex: none; overflow: visible; }
.defs { position: absolute; width: 0; height: 0; }
.chev { width: 10px; height: 10px; }

/* Title bar */
.titlebar { display: flex; align-items: center; height: 59px; padding-left: 20px; color: #b4b4b4; }
.xl-logo { width: 21px; height: 20px; }
.autosave { position: relative; display: flex; align-items: center; gap: 7px; margin-left: 19px; font-size: 13px; }
.autosave input { position: absolute; opacity: 0; }
.toggle { width: 54px; height: 25px; border: 1px solid #b4b4b4; border-radius: 13px; background: #fff; display: flex; align-items: center; gap: 7px; padding-left: 3px; }
.toggle::before { content: ""; width: 18px; height: 18px; border-radius: 50%; background: #b4b4b4; }
.quick { display: flex; align-items: center; gap: 8px; margin-left: 15px; width: 176px; }
.quick button:first-child { margin-right: 6px; }
.quick .chev + button { margin-left: 3px; }
.doc { display: flex; align-items: center; gap: 8px; width: 460px; white-space: nowrap; }
.topsearch { display: flex; align-items: center; gap: 14px; flex: 0 1 461px; height: 41px; padding-left: 18px; border: 1px solid #c4c4c4; border-radius: 4px; box-shadow: 0 1px 2px #ccc; }
.topsearch input { flex: 1; font-size: 15px; }
.topsearch input::placeholder { color: #a4a4a4; }
.window { display: flex; align-items: center; margin-left: auto; }
.window button { width: 60px; height: 30px; }
.avatar { width: 30px; height: 30px; border-radius: 50%; background: #5f3428; color: #fff; font-size: 12px; line-height: 30px; text-align: center; margin-right: 15px; }

/* Ribbon tabs */
.tabs { display: flex; align-items: center; height: 39px; padding-left: 27px; gap: 25px; font-size: 16px; }
.tabs a { color: inherit; text-decoration: none; padding-top: 4px; line-height: 27px; border-bottom: 3px solid transparent; white-space: nowrap; }
.tabs a:first-child { margin-right: 7px; }
.tabs .on { font-weight: 600; border-color: #1e6b41; }
.tab-actions { display: flex; gap: 10px; margin-left: auto; padding-right: 15px; }
.tab-actions button { height: 30px; border-radius: 4px; gap: 5px; }
.comments { width: 117px; background: #fff; border: 1px solid #888; }
.share { width: 89px; background: #107c41; color: #fff; }

/* Ribbon */
.ribbon { display: flex; margin: 0 10px; height: 124px; background: #fff; border-radius: 8px; box-shadow: 0 1px 4px #bbb; }
.group { flex: none; display: flex; flex-direction: column; margin: 6px 0 3px; border-right: 1px solid #d4d4d4; }
.g-clip { width: 139px; } .g-font { width: 292px; } .g-align { width: 373px; } .g-num { width: 200px; } .g-styles { width: 243px; }
.g-cells { width: 180px; } .g-edit { width: 267px; } .g-add { width: 78px; } .g-analyze { width: 76px; }
.body { display: flex; height: 97px; }
.cap { position: relative; font-size: 12px; line-height: 18px; text-align: center; padding-right: 18px; }
.g-styles .cap, .g-cells .cap, .g-edit .cap, .g-add .cap { padding: 0; }
.launch { position: absolute; right: 4px; top: 4px; width: 10px; height: 10px; }
.big { flex-direction: column; justify-content: flex-start; padding-top: 4px; }
.big > span { margin-top: 3px; }
.big > .chev { margin-top: 6px; }
.paste { width: 64px; margin-left: 10px; }
.paste > span, .paste > .chev { margin-top: 5px; }
.stack { display: flex; flex-direction: column; }
.stack button { height: 31px; width: 24px; }
.stack .tb { width: 115px; }
.mid { margin: 40px 0 0 12px; }
.rows { display: flex; flex-direction: column; gap: 10px; padding-top: 8px; }
.row { display: flex; align-items: center; height: 30px; }
.g-font .body, .g-num .body, .g-align .rows { padding-left: 9px; }
.sel { height: 30px; border: 1px solid #888; border-radius: 5px; display: flex; align-items: center; padding: 0 3px; }
.sel select { appearance: none; flex: 1; min-width: 0; }
.w-font { width: 143px; margin-left: 1px; }
.w-size { width: 61px; margin: 0 4px 0 2px; }
.w-num { width: 180px; margin-left: 2px; }
.ib { width: 32px; height: 30px; font-size: 16px; }
.it { font-family: "Liberation Serif", serif; font-size: 18px; }
.big-a { font-size: 20px; }
.small-a { font-size: 17px; }
.big-a .chev, .small-a .chev { margin-bottom: 12px; color: #1e78c8; width: 8px; }
.up { transform: rotate(180deg); }
.wide { margin: 0 3px; }
.sep { width: 1px; height: 30px; background: #d4d4d4; margin: 0 2px; flex: none; }
.tall { height: 80px; margin: 8px 0 0 4px; }
.fontcolor { width: 20px; margin: 0 5px 0 11px; height: 24px; line-height: 20px; border-bottom: 5px solid #f00; font-size: 18px; }
.pressed { background: #e6e6e6; border: 1px solid #888; border-radius: 5px; }
.g-align .wraps { padding-left: 12px; flex: 1; }
.tb { height: 30px; gap: 5px; justify-content: flex-start; }
.end { margin-left: auto; }
.wraps .tb { padding-right: 20px; }
.sym { font-size: 20px; }
.pc { margin-left: 3px; }
.g-styles .body { padding-left: 7px; }
.g-cells .body { padding-left: 9px; }
.w98 { width: 98px; } .w68 { width: 68px; } .w64 { width: 64px; } .w54 { width: 54px; } .w58 { width: 58px; } .w76 { width: 76px; }
.edits { width: 130px; padding-left: 15px; margin-right: 11px; }
.collapse { margin: 99px 11px 0 auto; width: 16px; height: 16px; }

/* Formula bar */
.formula { display: flex; align-items: flex-start; margin: 10px 11px 8px 10px; height: 78px; font-family: Roboto, sans-serif; font-size: 16px; }
.namebox, .fx, .fbox { background: #fff; border: 1px solid #ddd; border-radius: 5px; }
.namebox { display: flex; align-items: center; width: 126px; height: 30px; padding: 0 6px; }
.namebox input { flex: 1; min-width: 0; }
.dots { width: 3px; height: 16px; background: repeating-linear-gradient(#444 0 3px, transparent 3px 6px); }
.formula .dots { margin: 7px 11px 0 12px; }
.fx { display: flex; align-items: center; width: 107px; height: 30px; }
.fx button { width: 30px; }
.fx .fxb { font: 22px "Liberation Serif", serif; }
.gray { color: #999; }
.fbox { flex: 1; display: flex; height: 78px; margin-left: 5px; padding: 5px 3px 4px 12px; }
.fbox textarea { flex: 1; resize: none; line-height: 20px; }

/* Worksheet */
.sheet { flex: 1; min-height: 0; display: flex; font: 16px/20px Roboto, sans-serif; color: #151515; }
.gridwrap { flex: 1; min-width: 0; overflow: hidden; }
table { width: 100%; table-layout: fixed; border-collapse: separate; border-spacing: 0; }
.c34 { width: 34px; } .c91 { width: 91px; } .c104 { width: 104px; } .c111 { width: 111px; } .c122 { width: 122px; } .c129 { width: 129px; }
.c135 { width: 135px; } .c148 { width: 148px; } .c186 { width: 186px; } .c315 { width: 315px; }
td, th { height: 24px; padding: 3px 3px 0 2px; white-space: nowrap; overflow: hidden; border: 0 solid #d9d9d9; border-width: 0 1px 1px 0; }
td { background: #fff; text-align: right; }
th { font-weight: 400; color: #555; border-color: #e2e2e2; text-align: center; }
tbody th { border-right-color: #a8a8a8; }
thead th { border-bottom-color: #9c9c9c; }
thead th:first-child { padding: 5px 3px 0 15px; border-color: #f0f0f0; }
.corner { display: block; width: 15px; height: 15px; background: #dedede; clip-path: polygon(100% 0, 100% 100%, 0 100%); }
td:nth-child(2), td:nth-child(6), td:nth-child(7), td:nth-child(14), td:nth-child(15), .head td { text-align: left; padding-left: 3px; padding-right: 0; }
.head td { color: #1c1cc8; }
.head svg { vertical-align: -3px; }
.spill td:nth-child(7) { overflow: visible; position: relative; border-right-color: #fff; }
.vscroll { width: 25px; display: flex; flex-direction: column; align-items: center; padding: 4px 0 2px; border-left: 1px solid #e0e0e0; background: #f4f4f4; }
.vthumb { width: 11px; height: 47px; margin-top: 6px; border-radius: 6px; background: #6e6e6e; }
.tri { width: 12px; height: 11px; background: #6e6e6e; clip-path: polygon(50% 0, 100% 100%, 0 100%); }
.down { margin-top: auto; clip-path: polygon(0 0, 100% 0, 50% 100%); }

/* Sheet tabs */
.sheettabs { display: flex; height: 41px; padding-left: 15px; border-top: 1px solid #e4e4e4; }
.nav { width: 41px; height: 36px; }
.stab { width: 112px; height: 36px; margin: -1px 0 0 44px; background: #fff; border-radius: 0 0 6px 6px; box-shadow: 0 1px 2px #ccc; font-weight: 600; font-size: 17px; }
.stab span { border-bottom: 2px solid #1e6b41; line-height: 26px; }
.add { margin: 5px 0 0 4px; padding: 0 51px; height: 26px; border-left: 1px solid #d4d4d4; }
.hzone { display: flex; align-items: center; gap: 20px; flex: 0 1 739px; height: 36px; margin: 0 27px 0 auto; }
.hscroll { flex: 1; display: flex; align-items: center; gap: 7px; height: 22px; background: #f5f5f5; border-radius: 4px; padding: 0 2px 0 4px; }
.htrack { flex: 1; }
.hthumb { display: block; width: 82%; height: 11px; border-radius: 5px; background: #6e6e6e; }
.left { width: 9px; height: 12px; clip-path: polygon(100% 0, 100% 100%, 0 50%); }
.right { width: 9px; height: 12px; clip-path: polygon(0 0, 100% 50%, 0 100%); }

/* Status bar */
.status { display: flex; align-items: center; height: 26px; padding: 0 10px 0 14px; background: #f5f5f5; font-size: 12px; }
.status > span:not(.pct) { font-size: 13px; }
.acc { display: flex; align-items: center; gap: 3px; margin-left: 24px; }
.views { display: flex; margin-left: auto; margin-right: 2px; }
.views button { width: 50px; height: 26px; }
.views .sel-view { background: #e0e0e0; }
.z { width: 16px; font-size: 18px; }
.status input { appearance: none; width: 124px; height: 2px; background: #777; margin: 0 4px; }
.status input::-webkit-slider-thumb { appearance: none; width: 6px; height: 14px; background: #666; }
.pct { margin-left: 14px; }

/* Taskbar */
.taskbar { display: flex; align-items: center; height: 60px; background: #1f1f1f; color: #fff; }
.weather { position: relative; display: flex; gap: 5px; width: 200px; padding-left: 28px; font-size: 14px; }
.weather .badge { position: absolute; left: 46px; top: -2px; font-size: 12px; }
.center { display: flex; align-items: center; margin-left: 302px; }
.start { width: 30px; }
.tsearch { display: flex; align-items: center; gap: 12px; width: 273px; height: 38px; margin: 0 4px 0 17px; padding-left: 14px; border-radius: 19px; background: #f3f3f3; }
.tsearch input { font-size: 16px; width: 160px; }
.tsearch input::placeholder { color: #606060; }
.app { position: relative; width: 55px; height: 60px; }
.run::after { content: ""; position: absolute; left: 24px; bottom: 6px; width: 8px; height: 4px; border-radius: 2px; background: #9a9a9a; }
.prof { position: absolute; left: 28px; top: 9px; width: 20px; height: 20px; border-radius: 50%; color: #fff; font: 11px/20px Roboto, sans-serif; display: flex; align-items: center; justify-content: center; }
.p1 { background: #0b5345; }
.p2 { background: #f6c28e; }
.p3 { background: #5b4038; }
.zoomapp span { width: 30px; height: 30px; border-radius: 10px; background: #0b5cff; font: 600 10px/28px "Open Sans", sans-serif; }
.zoomapp i { position: absolute; left: 37px; top: 17px; width: 10px; height: 10px; border-radius: 50%; background: #fa3b3b; }
.tray { display: flex; align-items: center; margin-left: auto; padding-right: 24px; }
.sync { margin: 0 20px 0 22px; }
.sound { margin: 0 9px 0 8px; }
.batt { margin-right: 23px; }
.clock { font-size: 14px; text-align: right; }

/* Time tracker overlay, floats above every window */
.tracker { position: absolute; left: 0; bottom: 0; width: 200px; padding: 7px 5px 4px; background: rgba(40, 40, 40, .7); color: #ddd; }
.open { margin-left: auto; height: 21px; padding: 0 5px 0 7px; background: rgba(90, 90, 90, .5); border-radius: 3px; font-size: 14px; font-weight: 600; }
.working { margin-top: 11px; height: 33px; background: rgba(78, 160, 164, .86); line-height: 34px; text-align: center; font-weight: 700; border-bottom: 1px solid #0c5a35; }
```
